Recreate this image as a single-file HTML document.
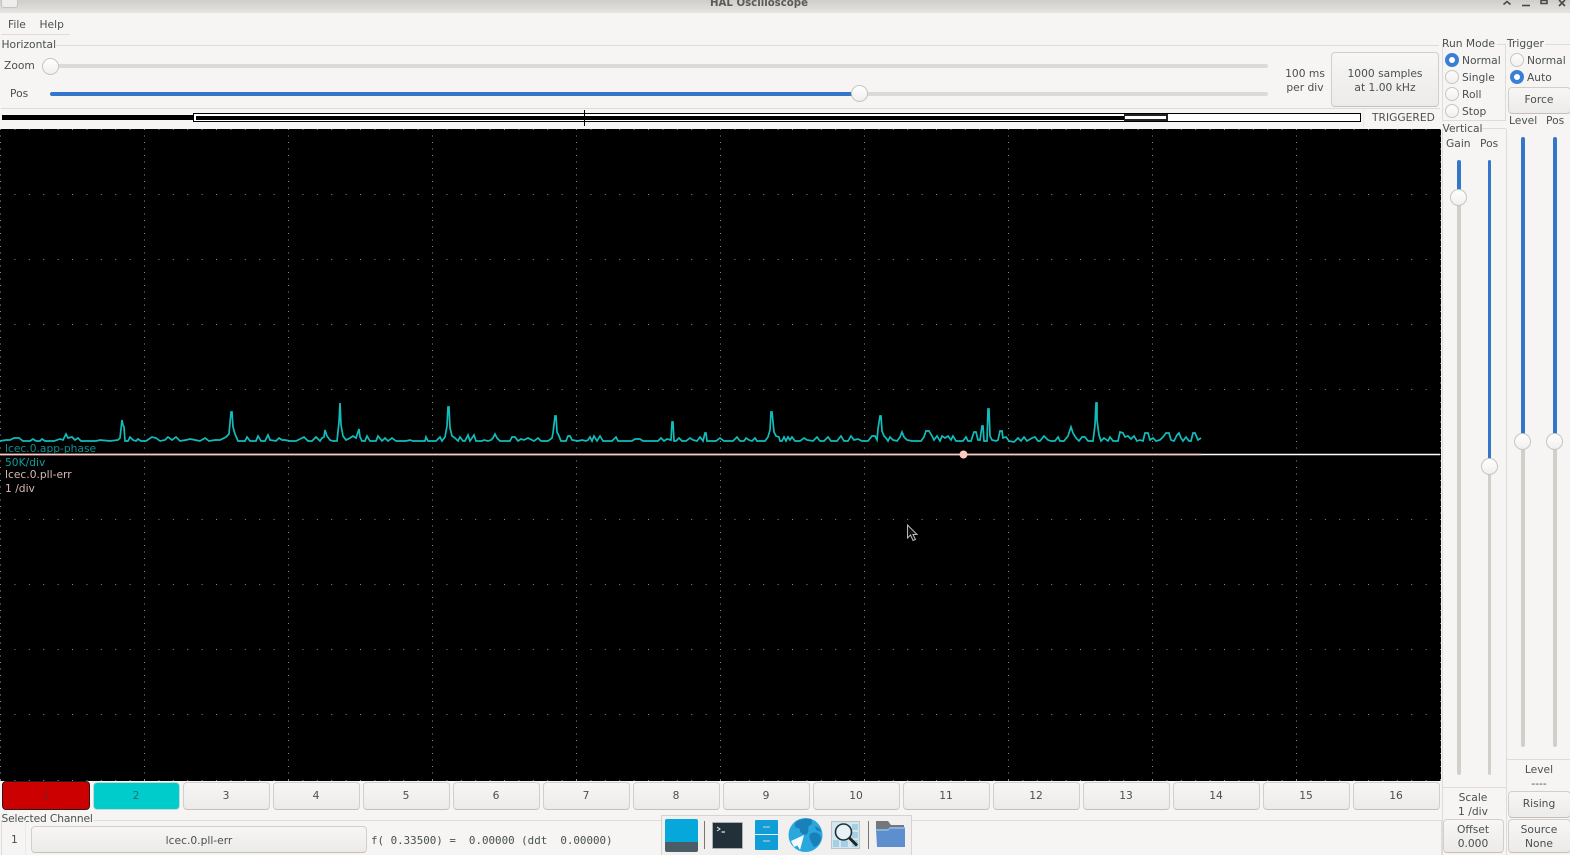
<!DOCTYPE html>
<html><head><meta charset="utf-8"><title>HAL Oscilloscope</title>
<style>
html,body{margin:0;padding:0;width:1570px;height:855px;overflow:hidden;background:#f6f5f4}
body{position:relative;font:10.7px/14px "DejaVu Sans",sans-serif;color:#4a4f50}
.a,.t,.b,.l,.r,.k,.s{position:absolute;box-sizing:border-box}
.t{white-space:nowrap}
.c{text-align:center}
.b{background:linear-gradient(#f7f6f5,#ecebe9);border:1px solid #d2cfcb;border-bottom-color:#c4c1bc;border-radius:4px;text-align:center;display:flex;align-items:center;justify-content:center;line-height:14px}
.p{padding-top:2px}
.l{background:#dedbd8}
.k{width:17px;height:17px;border-radius:50%;background:linear-gradient(#fff,#f0efee);border:1px solid #c8c5c1}
.r{width:14px;height:14px;border-radius:50%;background:linear-gradient(#fdfdfd,#f2f1f0);border:1px solid #c9c6c2}
.r.on{background:#fff;border:4px solid #3a7fd6}
.s{border-radius:2px}
.bl{background:#3476c9}
.gr{background:#d2cfcb}
</style></head><body>

<!-- title bar -->
<div class="a" style="left:0;top:0;width:1570px;height:13px;background:linear-gradient(#d0cecb,#e6e4e1)"></div>
<div class="a" style="left:1px;top:0;width:17px;height:8px;background:#eeedeb;border:1px solid #c6c3bf;border-top:0;border-radius:0 0 3px 3px"></div>
<div class="t" style="left:659px;width:200px;top:-3px;text-align:center;font-weight:bold;color:#5a5a58;font-size:10.2px">HAL Oscilloscope</div>
<svg class="a" style="left:1497px;top:0" width="73" height="10" fill="none" stroke="#4a4a48" stroke-width="1.6"><path d="M6.500 4.500 10 1.500 13.500 4.500"/><path d="M25 5.500H33"/><path d="M44 0.500H50V3.500H44Z"/><path d="M62 0 65 3 68 0M62 6 65 3 68 6"/></svg>

<!-- menu -->
<div class="t" style="left:8px;top:18px">File</div>
<div class="t" style="left:39.500px;top:18px">Help</div>
<div class="l" style="left:1px;top:34px;width:69px;height:1px"></div>

<!-- horizontal frame -->
<div class="t" style="left:1.500px;top:38px">Horizontal</div>
<div class="l" style="left:56px;top:45px;width:1383px;height:1px"></div>
<div class="t" style="left:4px;top:59px">Zoom</div>
<div class="s" style="left:51px;top:64px;width:1217px;height:4px;background:#dcd9d6"></div>
<div class="k" style="left:42px;top:58px"></div>
<div class="t" style="left:10px;top:87px">Pos</div>
<div class="s" style="left:859px;top:92px;width:409px;height:4px;background:#dcd9d6"></div>
<div class="s bl" style="left:50px;top:92px;width:809px;height:4px"></div>
<div class="k" style="left:851px;top:85px"></div>
<div class="t c" style="left:1275px;width:60px;top:67px">100 ms<br>per div</div>
<div class="b p" style="left:1331px;top:52px;width:108px;height:55px;color:#4a4f50">1000 samples<br>at 1.00 kHz</div>
<div class="l" style="left:1px;top:108px;width:1439px;height:1px"></div>

<!-- record bar -->
<div class="a" style="left:2px;top:115px;width:191px;height:5px;background:#000"></div>
<div class="a" style="left:193px;top:113px;width:1168px;height:9px;background:#fff;border:1.500px solid #000"></div>
<div class="a" style="left:195.500px;top:115.500px;width:929px;height:4.500px;background:#000"></div>
<div class="a" style="left:1124px;top:114px;width:44px;height:7px;background:#222"></div>
<div class="a" style="left:1125px;top:116px;width:41px;height:2.500px;background:#fff"></div>
<div class="a" style="left:584px;top:110px;width:1px;height:16px;background:#000"></div>
<div class="t" style="left:1372px;top:111px;color:#50514f">TRIGGERED</div>
<div class="l" style="left:1363px;top:109px;width:1px;height:20px;background:#eceae8"></div>

<!-- scope -->
<svg class="a" style="left:0;top:129px;background:#000" width="1441" height="652" viewBox="0 129 1441 652">
<g fill="none" stroke="#8d8d8d" stroke-width="1" stroke-dasharray="1 13.400">
<path d="M0 129.500H1441M0 194.500H1441M0 259.500H1441M0 324.500H1441M0 389.500H1441M0 454.500H1441M0 519.500H1441M0 584.500H1441M0 649.500H1441M0 714.500H1441M0 780.500H1441"/>
</g>
<g fill="none" stroke="#8d8d8d" stroke-width="1" stroke-dasharray="1 5.500">
<path d="M.5 129V781M144.500 129V781M288.500 129V781M432.500 129V781M576.500 129V781M720.500 129V781M864.500 129V781M1008.500 129V781M1152.500 129V781M1296.500 129V781M1440.500 129V781"/>
</g>
<path d="M0 454.500H1440" stroke="#fff" stroke-width="1.500"/>
<path d="M0 454.500H1201" stroke="#ffc8c0" stroke-width="1.500"/>
<circle cx="963.500" cy="454.500" r="4" fill="#ffc8c0"/>
<polyline fill="none" stroke="#12bcbc" stroke-width="1.700" stroke-linejoin="miter" points="0 441 6 440 10 440 14 438 19 438 23 441 30 441 33 439 36 441 40 441 42 439 45 441 54 441 60 439 63 440 66 434 68 438 72 437 75 440 78 438 81 441 90 441 96 441 100 440 110 441 118 440 120 438 122 420 123 425 124 427 125 441 128 441 130 437 133 440 136 441 138 439 141 441 146 441 152 437 156 438 160 441 165 440 168 437 172 440 176 437 180 441 186 440 190 439 195 440 200 441 205 438 209 441 215 440 220 440 226 437 229 434 231 412 232 412 233 427 235 434 238 441 245 441 247 437 250 441 256 441 258 436 261 441 265 441 268 435 270 440 276 441 279 438 282 440 285 440 290 441 296 441 304 437 308 441 312 441 316 437 320 441 322 438 324 437 325 430 327 436 330 440 333 441 337 441 339 422 340 403 341 425 343 436 346 440 350 438 353 436 356 438 359 429 360 437 362 441 365 441 367 436 370 441 376 441 378 436 382 441 385 438 388 441 392 438 396 441 402 441 406 441 410 440 413 441 417 441 420 441 425 441 426 437 428 441 433 441 436 441 440 437 442 441 445 437 447 426 448 407 449 407 450 428 452 436 455 438 458 441 460 437 463 441 465 441 468 435 470 441 474 435 476 441 482 441 484 440 488 441 491 440 493 438 495 434 497 438 500 441 510 441 512 437 515 437 518 441 521 439 524 440 528 438 532 440 534 441 538 438 541 441 546 441 548 441 552 438 553 433 555 416 556 416 557 432 559 436 561 441 566 441 568 436 570 436 572 440 578 441 582 440 586 441 588 440 590 437 592 441 594 436 597 441 600 436 603 441 606 441 612 441 616 437 618 441 628 441 632 441 635 439 640 439 643 441 650 441 654 441 658 441 661 438 664 441 667 439 671 440 672 422 673 422 674 441 676 441 679 438 682 441 686 441 690 438 693 440 697 441 700 437 703 441 705 433 706 433 707 441 712 441 716 441 720 438 724 441 730 441 733 441 737 437 740 441 744 441 746 438 749 440 752 441 755 438 757 441 761 441 765 441 768 437 770 430 771 412 772 412 774 432 776 436 779 437 780 441 782 441 784 437 786 441 788 437 790 440 792 437 795 441 800 441 804 438 807 440 813 441 817 437 820 441 824 441 828 437 831 441 837 441 841 436 844 441 848 441 851 436 854 440 858 439 862 441 868 441 872 436 875 436 877 440 878 429 880 416 881 416 882 431 884 436 886 438 888 441 890 437 893 440 897 441 900 437 902 432 904 437 907 440 912 441 919 441 921 441 924 437 926 431 929 431 932 436 934 440 937 436 940 441 942 436 945 438 948 436 951 440 953 436 956 441 960 441 963 441 966 437 968 441 971 441 974 432 976 432 978 440 980 440 982 426 983 426 984 441 987 441 988 409 989 409 990 436 992 440 996 441 998 440 1000 431 1002 431 1003 438 1006 437 1009 441 1014 442 1018 438 1021 441 1024 437 1027 441 1032 438 1035 437 1038 441 1040 441 1044 436 1048 440 1051 441 1055 441 1058 437 1060 441 1064 441 1068 436 1071 427 1073 433 1076 438 1079 441 1082 437 1085 437 1088 441 1093 441 1095 425 1096 403 1097 403 1097 420 1099 435 1101 441 1104 438 1108 441 1110 437 1113 441 1118 441 1120 432 1123 433 1125 437 1128 436 1131 439 1134 436 1137 441 1140 440 1143 441 1145 433 1148 433 1150 440 1153 438 1156 441 1160 440 1163 437 1166 433 1169 433 1171 440 1174 441 1177 435 1179 433 1181 438 1183 441 1186 437 1189 441 1191 441 1193 433 1195 433 1198 440 1201 438"/>
<path d="M907.500 525V538L910.500 535L913 540.500L915.500 539.500L913 534.500H917Z" fill="#111" stroke="#bbb" stroke-width="1"/>
<text x="5" y="452" font-family="DejaVu Sans,sans-serif" font-size="10.700" fill="#0a8f8f">lcec.0.app-phase</text>
<text x="5" y="466" font-family="DejaVu Sans,sans-serif" font-size="10.700" fill="#0f9e9e">50K/div</text>
<text x="5" y="478" font-family="DejaVu Sans,sans-serif" font-size="10.700" fill="#d8b8b4">lcec.0.pll-err</text>
<text x="5" y="492" font-family="DejaVu Sans,sans-serif" font-size="10.700" fill="#d8b8b4">1 /div</text>
</svg>

<!-- channel buttons -->
<div class="b" style="left:2px;top:781px;width:88px;height:29px;background:#cc0000;border:1.500px solid #2a1a1a;color:#7a2020">1</div>
<div class="b" style="left:92.500px;top:782px;width:87px;height:28px;background:#00cccc;border-color:#c8d8d8;color:#1f6f70">2</div>
<div class="b" style="left:182.500px;top:782px;width:87px;height:28px">3</div>
<div class="b" style="left:272.500px;top:782px;width:87px;height:28px">4</div>
<div class="b" style="left:362.500px;top:782px;width:87px;height:28px">5</div>
<div class="b" style="left:452.500px;top:782px;width:87px;height:28px">6</div>
<div class="b" style="left:542.500px;top:782px;width:87px;height:28px">7</div>
<div class="b" style="left:632.500px;top:782px;width:87px;height:28px">8</div>
<div class="b" style="left:722.500px;top:782px;width:87px;height:28px">9</div>
<div class="b" style="left:812.500px;top:782px;width:87px;height:28px">10</div>
<div class="b" style="left:902.500px;top:782px;width:87px;height:28px">11</div>
<div class="b" style="left:992.500px;top:782px;width:87px;height:28px">12</div>
<div class="b" style="left:1082.500px;top:782px;width:87px;height:28px">13</div>
<div class="b" style="left:1172.500px;top:782px;width:87px;height:28px">14</div>
<div class="b" style="left:1262.500px;top:782px;width:87px;height:28px">15</div>
<div class="b" style="left:1352.500px;top:782px;width:87px;height:28px">16</div>

<!-- selected channel -->
<div class="t" style="left:1.500px;top:812px;letter-spacing:-.15px">Selected Channel</div>
<div class="l" style="left:94px;top:820px;width:1347px;height:1px"></div>
<div class="l" style="left:1441px;top:820px;width:1px;height:35px"></div>
<div class="l" style="left:1px;top:820px;width:1px;height:35px"></div>
<div class="t" style="left:11px;top:833px">1</div>
<div class="l" style="left:25px;top:820px;width:1px;height:35px;background:#eceae8"></div>
<div class="b p" style="left:31px;top:826px;width:336px;height:27px">lcec.0.pll-err</div>
<div class="t" style="left:371px;top:834px;font:10.850px/14px 'DejaVu Sans Mono',monospace;white-space:pre">f( 0.33500) =  0.00000 (ddt  0.00000)</div>

<!-- dock -->
<div class="a" style="left:661px;top:815px;width:251px;height:41px;background:#f1f0ee;border:1px solid #d6d4d1"></div>
<div class="a" style="left:665px;top:819px;width:33px;height:33px;border-radius:2px;background:linear-gradient(#06a8dc 0 69%,#4a5c66 69%)"></div>
<div class="a" style="left:704px;top:821px;width:1px;height:28px;background:#777"></div>
<div class="a" style="left:712px;top:822px;width:31px;height:27px;background:#22303a;border:1px solid #aab0b4;border-radius:1px"></div>
<svg class="a" style="left:712px;top:822px" width="30" height="27" fill="none" stroke="#e8eef0" stroke-width="1"><path d="M5 5 8 7 5 9"/><path d="M9.500 10H13" stroke-width="1.200"/></svg>
<div class="a" style="left:755px;top:820px;width:23px;height:30px;background:#0f9ed8;border-radius:1px"></div>
<div class="a" style="left:755px;top:834px;width:23px;height:1px;background:#e6f4fa"></div>
<div class="a" style="left:763px;top:826px;width:7px;height:2px;background:#7fb4cc"></div>
<div class="a" style="left:763px;top:840px;width:7px;height:2px;background:#7fb4cc"></div>
<svg class="a" style="left:788px;top:817px" width="36" height="36">
<circle cx="17.500" cy="18" r="17" fill="#2aa8de"/>
<path d="M8 5C12 2 18 1 23 2C25 5 24 8 21 9C19 12 22 14 19 17C16 19 14 16 12 15C13 12 10 10 8 11C7 9 6 7 8 5Z" fill="#1a80ba"/>
<path d="M22 17C26 14 31 15 33 20C33 25 30 29 26 30C24 27 20 21 22 17Z" fill="#1a80ba"/>
<path d="M27 9 32 12 33 15 28 13Z" fill="#1a80ba"/>
<path d="M3 24 16 18 12 33 9.500 28.500 6 30Z" fill="#f6fafc"/>
</svg>
<div class="a" style="left:831px;top:821px;width:29px;height:28px;background:#d4e6ee;border:1px solid #bcc4c8"></div>
<svg class="a" style="left:831px;top:821px" width="30" height="28" fill="none">
<g fill="#a4d0e6"><rect x="21" y="3" width="6" height="6"/><rect x="21" y="11" width="6" height="6"/><rect x="21" y="19" width="6" height="7"/><rect x="2" y="19" width="6" height="7"/><rect x="10" y="20" width="7" height="6"/></g>
<circle cx="12.500" cy="11" r="8" fill="#e6f2f6" stroke="#203038" stroke-width="1.600"/><path d="M18.500 17 26 24.500" stroke="#222" stroke-width="3"/></svg>
<div class="a" style="left:868px;top:821px;width:1px;height:28px;background:#777"></div>
<svg class="a" style="left:875px;top:820px" width="31" height="29"><path d="M1 1H13L16 5H29V12H1Z" fill="#75787b"/><path d="M1 9H13L15 7H30V27H2Z" fill="#5d8fcf"/><path d="M1 9H13L15 7H30V9H15L13 11H1Z" fill="#86b0e0"/></svg>

<!-- run mode -->
<div class="t" style="left:1442px;top:37px">Run Mode</div>
<div class="l" style="left:1497px;top:44px;width:9px;height:1px"></div>
<div class="l" style="left:1442px;top:44px;width:1px;height:76px"></div>
<div class="l" style="left:1505px;top:44px;width:1px;height:76px"></div>
<div class="l" style="left:1442px;top:120px;width:64px;height:1px"></div>
<div class="r on" style="left:1445px;top:53px"></div><div class="t" style="left:1462px;top:54px">Normal</div>
<div class="r" style="left:1445px;top:70px"></div><div class="t" style="left:1462px;top:71px">Single</div>
<div class="r" style="left:1445px;top:87px"></div><div class="t" style="left:1462px;top:88px">Roll</div>
<div class="r" style="left:1445px;top:104px"></div><div class="t" style="left:1462px;top:105px">Stop</div>

<!-- trigger -->
<div class="t" style="left:1507px;top:37px">Trigger</div>
<div class="l" style="left:1545px;top:44px;width:25px;height:1px"></div>
<div class="r" style="left:1510px;top:53px"></div><div class="t" style="left:1527px;top:54px">Normal</div>
<div class="r on" style="left:1510px;top:70px"></div><div class="t" style="left:1527px;top:71px">Auto</div>
<div class="b" style="left:1507.500px;top:86.500px;width:63px;height:27px">Force</div>
<div class="t" style="left:1509px;top:114px">Level</div>
<div class="t" style="left:1546px;top:114px">Pos</div>

<!-- vertical -->
<div class="t" style="left:1442.500px;top:122px">Vertical</div>
<div class="l" style="left:1482px;top:128px;width:24px;height:1px"></div>
<div class="l" style="left:1442px;top:129px;width:1px;height:726px"></div>
<div class="l" style="left:1505.500px;top:129px;width:1px;height:726px"></div>
<div class="t" style="left:1446px;top:137px">Gain</div>
<div class="t" style="left:1480px;top:137px">Pos</div>

<div class="s gr" style="left:1457px;top:198px;width:3.500px;height:577px"></div>
<div class="s bl" style="left:1457px;top:160px;width:3.500px;height:38px"></div>
<div class="k" style="left:1450px;top:189px"></div>
<div class="s gr" style="left:1487.500px;top:466px;width:3.500px;height:309px"></div>
<div class="s bl" style="left:1487.500px;top:160px;width:3.500px;height:306px"></div>
<div class="k" style="left:1481px;top:458px"></div>
<div class="s gr" style="left:1521px;top:441px;width:3.500px;height:306px"></div>
<div class="s bl" style="left:1521px;top:137px;width:3.500px;height:304px"></div>
<div class="k" style="left:1514px;top:433px"></div>
<div class="s gr" style="left:1553px;top:441px;width:3.500px;height:306px"></div>
<div class="s bl" style="left:1553px;top:137px;width:3.500px;height:304px"></div>
<div class="k" style="left:1546px;top:433px"></div>

<div class="l" style="left:1443px;top:787px;width:63px;height:1px"></div>
<div class="l" style="left:1506px;top:759px;width:64px;height:1px"></div>
<div class="t c" style="left:1442px;width:62px;top:791px">Scale<br>1 /div</div>
<div class="b p" style="left:1442.500px;top:819px;width:61px;height:34px">Offset<br>0.000</div>
<div class="t c" style="left:1508px;width:62px;top:763px">Level<br>----</div>
<div class="b" style="left:1507.500px;top:790.500px;width:63px;height:27px">Rising</div>
<div class="b p" style="left:1507.500px;top:819px;width:63px;height:34px">Source<br>None</div>
</body></html>
